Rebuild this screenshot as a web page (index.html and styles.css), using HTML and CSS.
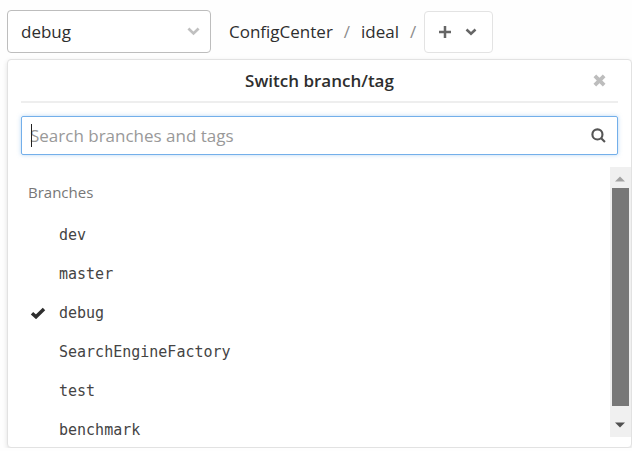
FILE: index.html
```html
<!DOCTYPE html>
<html lang="en">
<head>
<meta charset="utf-8">
<title>Switch branch/tag</title>
<link rel="stylesheet" href="styles.css">
</head>
<body>
<header class="toolbar">
  <button class="ref-button" type="button" aria-expanded="true">
    <span>debug</span>
    <svg class="ref-arrow" viewBox="0 0 12 8" aria-hidden="true"><path d="M1.3 1.3 6 5.8l4.7-4.5"/></svg>
  </button>
  <nav class="crumbs" aria-label="Path">
    <a href="#">ConfigCenter</a>
    <span class="slash">/</span>
    <a href="#">ideal</a>
    <span class="slash">/</span>
  </nav>
  <button class="add-button" type="button" aria-label="Add to tree">
    <svg class="add-plus" viewBox="0 0 12 12" aria-hidden="true"><path d="M6 0v12M0 6h12"/></svg>
    <svg class="add-arrow" viewBox="0 0 12 8" aria-hidden="true"><path d="M1.5 1.5 6 5.7l4.5-4.2"/></svg>
  </button>
</header>
<section class="panel">
  <div class="panel-title">
    <h1>Switch branch/tag</h1>
    <button class="close" type="button" aria-label="Close">
      <svg viewBox="0 0 12 12" aria-hidden="true"><path d="M1.7 1.7l8.6 8.6M10.3 1.7l-8.6 8.6"/></svg>
    </button>
  </div>
  <div class="search">
    <span class="caret"></span>
    <input type="text" placeholder="Search branches and tags" aria-label="Search branches and tags">
    <svg class="search-icon" viewBox="0 0 14 14" aria-hidden="true"><circle cx="6" cy="6" r="4.7"/><path d="M9.5 9.5l3.5 3.5"/></svg>
  </div>
  <div class="results">
    <div class="list">
      <h2>Branches</h2>
      <ul>
        <li><a href="#">dev</a></li>
        <li><a href="#">master</a></li>
        <li><a href="#" aria-current="true"><svg class="check" viewBox="0 0 16 12" aria-hidden="true"><path d="M2 6.2l4 3.6L14 2"/></svg>debug</a></li>
        <li><a href="#">SearchEngineFactory</a></li>
        <li><a href="#">test</a></li>
        <li><a href="#">benchmark</a></li>
      </ul>
    </div>
    <div class="scrollbar" aria-hidden="true">
      <svg class="step up" viewBox="0 0 20 20"><path d="M5 14l5-5 5 5z"/></svg>
      <div class="thumb"></div>
      <svg class="step down" viewBox="0 0 20 20"><path d="M5 6h10l-5 5z"/></svg>
    </div>
  </div>
</section>
</body>
</html>
```
FILE: styles.css
```css
* {
  box-sizing: border-box;
}

body {
  margin: 0;
  padding: 10px 0 0 7px;
  background: #fefefe;
  color: #2e2e2e;
  font-family: "Open Sans", "Noto Sans", sans-serif;
  font-size: 17px;
  overflow: hidden;
}

button {
  font: inherit;
  color: inherit;
  background: #fff;
  cursor: pointer;
}

a {
  color: inherit;
  text-decoration: none;
}

svg {
  display: block;
  fill: none;
  stroke: currentColor;
}

.toolbar {
  display: flex;
  align-items: center;
  height: 43px;
}

.ref-button {
  display: flex;
  align-items: center;
  justify-content: space-between;
  width: 204px;
  height: 43px;
  padding: 0 10px 0 13px;
  border: 1px solid #bdbdbd;
  border-radius: 4px;
}

.ref-arrow {
  width: 13px;
  height: 9px;
  color: #c0c0c0;
  stroke-width: 2.5;
}

.crumbs {
  display: flex;
  gap: 11px;
  margin: 0 8px 0 18px;
}

.slash {
  color: #8c8c8c;
}

.add-button {
  display: flex;
  align-items: center;
  gap: 14px;
  width: 69px;
  height: 42px;
  padding: 0 14px;
  border: 1px solid #e3e3e3;
  border-radius: 4px;
  color: #666;
}

.add-plus {
  width: 12px;
  height: 12px;
  stroke-width: 2.5;
}

.add-arrow {
  width: 12px;
  height: 8px;
  stroke-width: 2.5;
}

.panel {
  margin-top: 6px;
  padding-bottom: 10px;
  border: 1px solid #e2e2e2;
  border-radius: 4px;
  background: #fff;
  box-shadow: 0 2px 5px rgba(0, 0, 0, 0.12);
}

.panel-title {
  display: flex;
  align-items: center;
  height: 43px;
  margin: 0 13px;
  border-bottom: 2px solid #eee;
}

.panel-title h1 {
  flex: 1;
  margin: 0;
  padding-left: 37px;
  font-size: 17px;
  font-weight: 600;
  text-align: center;
}

.close {
  padding: 0 12px;
  border: 0;
  color: #bdbdbd;
}

.close svg {
  width: 13px;
  height: 13px;
  stroke-width: 3.5;
}

.search {
  position: relative;
  display: flex;
  align-items: center;
  height: 39px;
  margin: 13px 13px 0;
  padding: 0 11px 0 8px;
  border: 1px solid #73afea;
  border-radius: 2px;
  box-shadow: 0 0 4px rgba(115, 175, 234, 0.5);
}

.search input {
  flex: 1;
  min-width: 0;
  padding: 0;
  border: 0;
  outline: 0;
  background: transparent;
  color: inherit;
  font: inherit;
}

.search input::placeholder {
  color: #999;
  opacity: 1;
}

.caret {
  position: absolute;
  left: 9px;
  top: 7px;
  width: 1px;
  height: 23px;
  background: #222;
}

.search-icon {
  width: 15px;
  height: 15px;
  color: #555;
  stroke-width: 2;
}

.results {
  display: flex;
  height: 270px;
  margin-top: 12px;
}

.list {
  flex: 1;
  padding: 5px 0 0 20px;
}

.list h2 {
  margin: 0 0 4px;
  color: #777;
  font-size: 15px;
  font-weight: 400;
  line-height: 40px;
}

.list ul {
  margin: 0;
  padding: 0;
  list-style: none;
}

.list li a {
  position: relative;
  display: block;
  padding-left: 31px;
  color: #444;
  font-family: "DejaVu Sans Mono", monospace;
  font-size: 15px;
  line-height: 39px;
}

.check {
  position: absolute;
  left: 2px;
  top: 13px;
  width: 16px;
  height: 12px;
  color: #2e2e2e;
  stroke-width: 3.5;
}

.scrollbar {
  display: flex;
  flex-direction: column;
  width: 21px;
  background: #f0f0f0;
}

.step {
  width: 20px;
  height: 21px;
  stroke: none;
  fill: #505050;
}

.up {
  fill: #a3a3a3;
}

.down {
  margin-top: 10px;
}

.thumb {
  flex: 1;
  margin: 0 2px;
  background: #787878;
}
```
